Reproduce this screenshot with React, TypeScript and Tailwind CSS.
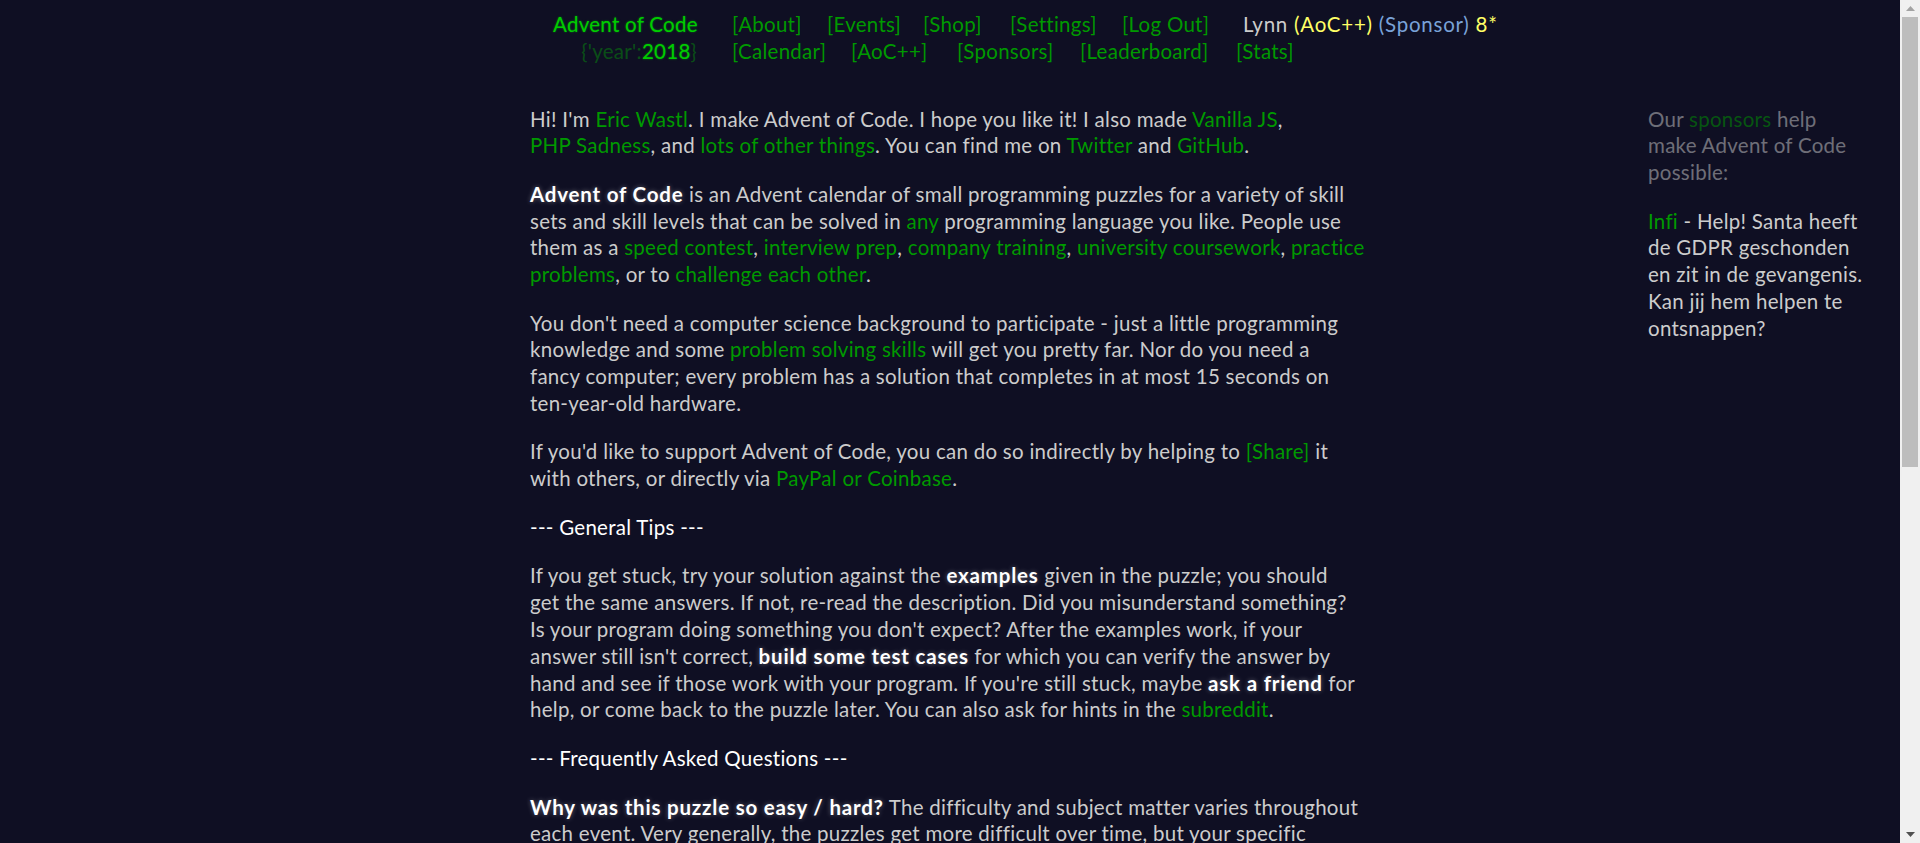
import React from "react";

const G = ({ children }: { children: React.ReactNode }) => (
  <span className="text-[#009900]">{children}</span>
);
const B = ({ children }: { children: React.ReactNode }) => (
  <span className="font-bold tracking-[0.8px] text-white [text-shadow:0_0_5px_rgba(255,255,255,0.35)]">{children}</span>
);

export default function App() {
  return (
    <div
      className="flex h-[843px] w-[1920px] overflow-hidden bg-[#0f0f23] text-[20.5px] leading-[26.8px] tracking-[0.27px] text-[#cccccc]"
      style={{ fontFamily: "Lato, 'Open Sans', sans-serif" }}
    >
      <div className="flex-1 whitespace-nowrap">
        {/* header */}
        <header className="pl-[553px] pt-[11px]">
          <div className="flex">
            <div className="w-[179px] text-[#00cc00] [text-shadow:0_0_2px_rgba(0,204,0,0.6)]">Advent of Code</div>
            <div className="w-[95px] text-[#009900]">[About]</div>
            <div className="w-[96px] text-[#009900]">[Events]</div>
            <div className="w-[87px] text-[#009900]">[Shop]</div>
            <div className="w-[112px] text-[#009900]">[Settings]</div>
            <div className="w-[121px] text-[#009900]">[Log Out]</div>
            <div className="tracking-[0.75px]">
              Lynn <span className="text-[#ffff66]">(AoC++)</span>{" "}
              <span className="text-[#79a2d8]">(Sponsor)</span>{" "}
              <span className="text-[#ffff66]">8*</span>
            </div>
          </div>
          <div className="flex">
            <div className="w-[179px] pr-[35px] text-right text-[#00cc00]">
              <span className="opacity-[0.33]">{"{'year':"}</span>
              <span className="[text-shadow:0_0_2px_rgba(0,204,0,0.6)]">2018</span>
              <span className="opacity-[0.33]">{"}"}</span>
            </div>
            <div className="w-[119px] text-[#009900]">[Calendar]</div>
            <div className="w-[106px] text-[#009900]">[AoC++]</div>
            <div className="w-[123px] text-[#009900]">[Sponsors]</div>
            <div className="w-[156px] text-[#009900]">[Leaderboard]</div>
            <div className="text-[#009900]">[Stats]</div>
          </div>
        </header>

        {/* body */}
        <div className="mt-[41px] flex pl-[530px]">
          <main className="w-[840px]">
            <p>
              Hi! I'm <G>Eric Wastl</G>. I make Advent of Code. I hope you like it! I also made <G>Vanilla JS</G>,
              <br />
              <G>PHP Sadness</G>, and <G>lots of other things</G>. You can find me on <G>Twitter</G> and <G>GitHub</G>.
            </p>
            <p className="mt-[21.6px]">
              <B>Advent of Code</B> is an Advent calendar of small programming puzzles for a variety of skill
              <br />
              sets and skill levels that can be solved in <G>any</G> programming language you like. People use
              <br />
              them as a <G>speed contest</G>, <G>interview prep</G>, <G>company training</G>, <G>university coursework</G>, <G>practice</G>
              <br />
              <G>problems</G>, or to <G>challenge each other</G>.
            </p>
            <p className="mt-[21.6px]">
              You don't need a computer science background to participate - just a little programming
              <br />
              knowledge and some <G>problem solving skills</G> will get you pretty far. Nor do you need a
              <br />
              fancy computer; every problem has a solution that completes in at most 15 seconds on
              <br />
              ten-year-old hardware.
            </p>
            <p className="mt-[21.6px]">
              If you'd like to support Advent of Code, you can do so indirectly by helping to <G>[Share]</G> it
              <br />
              with others, or directly via <G>PayPal or Coinbase</G>.
            </p>
            <h2 className="mt-[22px] text-white">--- General Tips ---</h2>
            <p className="mt-[21.6px]">
              If you get stuck, try your solution against the <B>examples</B> given in the puzzle; you should
              <br />
              get the same answers. If not, re-read the description. Did you misunderstand something?
              <br />
              Is your program doing something you don't expect? After the examples work, if your
              <br />
              answer still isn't correct, <B>build some test cases</B> for which you can verify the answer by
              <br />
              hand and see if those work with your program. If you're still stuck, maybe <B>ask a friend</B> for
              <br />
              help, or come back to the puzzle later. You can also ask for hints in the <G>subreddit</G>.
            </p>
            <h2 className="mt-[22px] text-white">--- Frequently Asked Questions ---</h2>
            <p className="mt-[21.6px]">
              <B>Why was this puzzle so easy / hard?</B> The difficulty and subject matter varies throughout
              <br />
              each event. Very generally, the puzzles get more difficult over time, but your specific
              <br />
              skillset will make each puzzle significantly easier or harder for you than someone else.
              <br />
              Making puzzles is tricky.
            </p>
          </main>
          <aside className="ml-[278px] w-[240px]">
            <p className="opacity-50">
              Our <span className="text-[#009900]">sponsors</span> help
              <br />
              make Advent of Code
              <br />
              possible:
            </p>
            <p className="mt-[21.6px]">
              <G>Infi</G> - Help! Santa heeft
              <br />
              de GDPR geschonden
              <br />
              en zit in de gevangenis.
              <br />
              Kan jij hem helpen te
              <br />
              ontsnappen?
            </p>
          </aside>
        </div>
      </div>

      {/* scrollbar */}
      <div className="flex w-[20px] flex-col bg-[#f0f0f0]">
        <div className="flex h-[17px] items-center justify-center">
          <svg width="9" height="5" viewBox="0 0 9 5">
            <path d="M4.5 0 L9 5 L0 5 Z" fill="#a3a3a3" />
          </svg>
        </div>
        <div className="mx-[2px] h-[450px] bg-[#bdbdbd]" />
        <div className="flex-1" />
        <div className="flex h-[17px] items-center justify-center">
          <svg width="9" height="5" viewBox="0 0 9 5">
            <path d="M0 0 L9 0 L4.5 5 Z" fill="#505050" />
          </svg>
        </div>
      </div>
    </div>
  );
}
